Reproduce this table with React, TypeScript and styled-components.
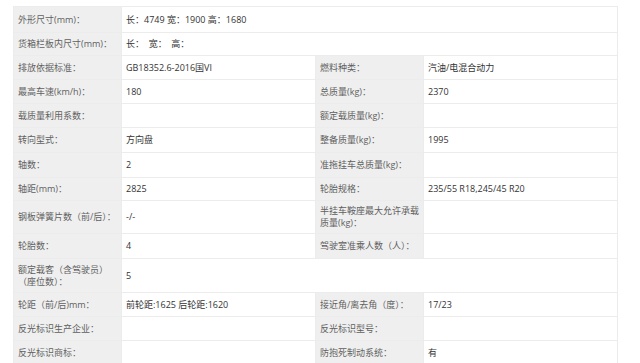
import React from "react";
import styled, { createGlobalStyle } from "styled-components";

const Global = createGlobalStyle`
  html, body { margin: 0; padding: 0; background: #fff; }
  body { font-family: "Open Sans", "Noto Sans CJK SC", sans-serif; }
`;

const Page = styled.div`
  padding: 6px 0 0 13px;
  width: 640px;
  height: 363px;
  box-sizing: border-box;
  overflow: hidden;
`;

const Table = styled.table`
  width: 604px;
  border-collapse: collapse;
  table-layout: fixed;
  font-family: "Open Sans", "Noto Sans CJK SC", sans-serif;
  font-size: 9px;
  line-height: 12px;
`;

const Row = styled.tr<{ $h?: number }>`
  height: ${(p) => p.$h ?? 24}px;
`;

const LabelCell = styled.td`
  background: #efefef;
  color: #5f5f5f;
  padding: 0 4px;
  border: 1px solid #ececec;
  vertical-align: middle;
  box-sizing: border-box;
  white-space: pre;
`;

const ValueCell = styled.td`
  background: #fff;
  color: #333;
  padding: 0 4px;
  border: 1px solid #ececec;
  vertical-align: middle;
  box-sizing: border-box;
  white-space: pre;
`;

type Item = [string, string];
type RowDef = { h?: number; left: Item; right?: Item };

const rows: RowDef[] = [
  { h: 26, left: ["外形尺寸(mm)：", "长：4749 宽：1900 高：1680"] },
  { h: 23, left: ["货箱栏板内尺寸(mm)：", "长：  宽：  高："] },
  { left: ["排放依据标准：", "GB18352.6-2016国VI"], right: ["燃料种类：", "汽油/电混合动力"] },
  { left: ["最高车速(km/h)：", "180"], right: ["总质量(kg)：", "2370"] },
  { left: ["载质量利用系数：", ""], right: ["额定载质量(kg)：", ""] },
  { h: 25, left: ["转向型式：", "方向盘"], right: ["整备质量(kg)：", "1995"] },
  { h: 25, left: ["轴数：", "2"], right: ["准拖挂车总质量(kg)：", ""] },
  { h: 23, left: ["轴距(mm)：", "2825"], right: ["轮胎规格：", "235/55 R18,245/45 R20"] },
  { h: 33, left: ["钢板弹簧片数（前/后）：", "-/-"], right: ["半挂车鞍座最大允许承载\n质量(kg)：", ""] },
  { h: 25, left: ["轮胎数：", "4"], right: ["驾驶室准乘人数（人）：", ""] },
  { h: 34, left: ["额定载客（含驾驶员）\n（座位数）：", "5"] },
  { left: ["轮距（前/后)mm：", "前轮距:1625 后轮距:1620"], right: ["接近角/离去角（度）：", "17/23"] },
  { left: ["反光标识生产企业：", ""], right: ["反光标识型号：", ""] },
  { left: ["反光标识商标：", ""], right: ["防抱死制动系统：", "有"] },
];

export default function App() {
  return (
    <>
      <Global />
      <Page>
        <Table>
          <colgroup>
            <col style={{ width: 108 }} />
            <col style={{ width: 194 }} />
            <col style={{ width: 108 }} />
            <col style={{ width: 194 }} />
          </colgroup>
          <tbody>
            {rows.map((r, i) => (
              <Row key={i} $h={r.h}>
                <LabelCell>{r.left[0]}</LabelCell>
                {r.right ? (
                  <>
                    <ValueCell>{r.left[1]}</ValueCell>
                    <LabelCell>{r.right[0]}</LabelCell>
                    <ValueCell>{r.right[1]}</ValueCell>
                  </>
                ) : (
                  <ValueCell colSpan={3}>{r.left[1]}</ValueCell>
                )}
              </Row>
            ))}
          </tbody>
        </Table>
      </Page>
    </>
  );
}
